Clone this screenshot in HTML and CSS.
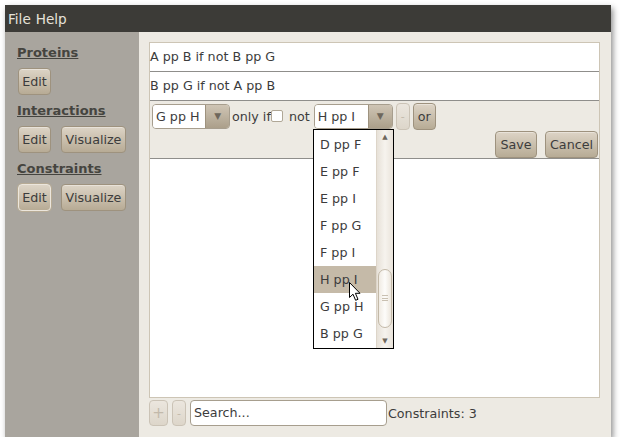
FILE: index.html
```html
<!DOCTYPE html>
<html>
<head>
<meta charset="utf-8">
<link rel="stylesheet" href="styles.css">
</head>
<body>
<div class="window">
  <div class="menubar"><span>File</span><span>Help</span></div>
  <div class="main">
    <div class="sidebar">
      <div class="section">
        <div class="heading">Proteins</div>
        <div class="btnrow"><button class="btn w-edit">Edit</button></div>
      </div>
      <div class="section">
        <div class="heading">Interactions</div>
        <div class="btnrow"><button class="btn w-edit">Edit</button><button class="btn w-vis">Visualize</button></div>
      </div>
      <div class="section">
        <div class="heading">Constraints</div>
        <div class="btnrow"><button class="btn w-edit focused">Edit</button><button class="btn w-vis">Visualize</button></div>
      </div>
    </div>
    <div class="content">
      <div class="panel">
        <div class="row">A pp B if not B pp G</div>
        <div class="row">B pp G if not A pp B</div>
        <div class="editrow">
          <div class="line1">
            <div class="combo c1"><span class="ctext">G pp H</span><span class="carrow">&#9660;</span></div>
            <span class="lbl l-only">only if</span>
            <span class="check"></span>
            <span class="lbl l-not">not</span>
            <div class="combo c2"><span class="ctext">H pp I</span><span class="carrow">&#9660;</span></div>
            <button class="btn dis minus">-</button>
            <button class="btn orbtn">or</button>
          </div>
          <div class="line2">
            <button class="btn save">Save</button>
            <button class="btn cancel">Cancel</button>
          </div>
        </div>
      </div>
      <div class="bottombar">
        <button class="btn dis plus">+</button>
        <button class="btn dis minus2">-</button>
        <div class="search">Search...</div>
        <span class="count">Constraints: 3</span>
      </div>
    </div>
  </div>
  <div class="popup">
    <div class="plist">
      <div class="item">D pp F</div>
      <div class="item">E pp F</div>
      <div class="item">E pp I</div>
      <div class="item">F pp G</div>
      <div class="item">F pp I</div>
      <div class="item sel">H pp I</div>
      <div class="item">G pp H</div>
      <div class="item">B pp G</div>
    </div>
    <div class="pscroll">
      <span class="up">&#9650;</span>
      <div class="thumb"><span class="grip"></span></div>
      <span class="down">&#9660;</span>
    </div>
  </div>
  <svg class="cursor" width="13" height="20" viewBox="0 0 13 20">
    <path d="M0.5 0.5 L0.5 15.5 L4 12.2 L6.6 18.3 L9 17.3 L6.4 11.3 L11 11.3 Z" fill="#fff" stroke="#000" stroke-width="1" stroke-linejoin="round"/>
  </svg>
</div>
</body>
</html>
```
FILE: styles.css
```css
* { box-sizing: border-box; }
body {
  margin: 0;
  background: #ffffff;
  font-family: "DejaVu Sans", sans-serif;
  font-size: 12.7px;
  color: #3c3c3c;
}
.window {
  position: relative;
  margin: 5px 0 0 5px;
  width: 606px;
  height: 432px;
  display: flex;
  flex-direction: column;
  box-shadow: 2px 3px 6px rgba(0,0,0,0.45);
}
.menubar {
  height: 27px;
  background: #3c3b37;
  color: #e6e2da;
  display: flex;
  align-items: center;
  gap: 5px;
  padding-left: 3px;
  font-size: 13.6px;
}
.main { flex: 1; display: flex; }
.sidebar {
  width: 134px;
  background: #a9a59e;
  padding: 11px 0 0 12px;
}
.section { height: 58px; }
.heading {
  height: 20px;
  line-height: 20px;
  font-weight: bold;
  font-size: 13px;
  text-decoration: underline;
  color: #45443f;
}
.btnrow { display: flex; gap: 10px; margin-top: 5px; padding-left: 1px; }
.btn {
  font-family: "DejaVu Sans", sans-serif;
  font-size: 12.7px;
  color: #3c3c3c;
  height: 27px;
  padding: 0;
  border: 1px solid #9e927e;
  border-radius: 4px;
  background: linear-gradient(#ddd4c6, #b7ab95);
  box-shadow: inset 0 1px 0 rgba(255,255,255,0.35);
}
.btn.focused { border-color: #ece6dc; box-shadow: 0 0 0 1px #b7ab95; }
.w-edit { width: 33px; }
.w-vis { width: 65px; }
.btn.dis {
  background: linear-gradient(#ebe6de, #ddd6ca);
  border-color: #cbc3b6;
  color: #c2b9ab;
  box-shadow: none;
}
.content {
  flex: 1;
  background: #edeae3;
  padding: 10px 11px 0 10px;
  display: flex;
  flex-direction: column;
}
.panel {
  height: 356px;
  background: #ffffff;
  border: 1px solid #cdc5b5;
}
.row {
  height: 29px;
  line-height: 28px;
  border-bottom: 1px solid #8f8e8b;
  white-space: nowrap;
}
.editrow {
  background: #edeae3;
  border-bottom: 1px solid #8f8e8b;
  padding: 1px 1px 0 1px;
}
.line1 { height: 28px; display: flex; align-items: center; }
.line2 { height: 28px; display: flex; justify-content: flex-end; align-items: flex-start; gap: 8px; padding-top: 1px; }
.combo {
  height: 25px;
  display: flex;
  border: 1px solid #a79e8e;
  border-radius: 4px;
  overflow: hidden;
}
.ctext {
  background: #fff;
  line-height: 23px;
  padding-left: 3px;
}
.carrow {
  background: linear-gradient(#cfc5b5, #ab9f8a);
  border-left: 1px solid #9e927e;
  color: #6e675c;
  font-size: 9px;
  line-height: 23px;
  text-align: center;
}
.c1 { width: 78px; margin-left: 1px; }
.c1 .ctext { width: 53px; }
.c1 .carrow { width: 24px; }
.c2 { width: 79px; margin-left: 4px; }
.c2 .ctext { width: 54px; }
.c2 .carrow { width: 24px; }
.lbl { margin-left: 2px; }
.check {
  width: 12px; height: 12px;
  background: #fff;
  border: 1px solid #b0a796;
  border-radius: 2px;
  margin-left: 0px;
}
.l-not { margin-left: 6px; }
.minus { width: 14px; height: 27px; margin-left: 3px; font-size: 11px; }
.orbtn { width: 23px; height: 27px; margin-left: 3px; }
.save { width: 42px; }
.cancel { width: 53px; }
.bottombar {
  margin-top: 2px;
  height: 26px;
  display: flex;
  align-items: center;
}
.plus { width: 19px; height: 26px; font-size: 15px; }
.minus2 { width: 14px; height: 26px; margin-left: 4px; font-size: 11px; }
.search {
  width: 197px;
  height: 26px;
  margin-left: 4px;
  background: #fff;
  border: 1px solid #a79e8e;
  border-radius: 4px;
  line-height: 24px;
  padding-left: 3px;
}
.count { margin-left: 1px; }
.popup {
  position: absolute;
  left: 308px;
  top: 124px;
  width: 81px;
  height: 220px;
  border: 1px solid #000;
  background: #fff;
  display: flex;
}
.plist { width: 62px; padding-top: 1px; }
.item {
  height: 27px;
  line-height: 27px;
  padding-left: 6px;
  white-space: nowrap;
}
.item.sel { background: #c5baa8; }
.pscroll {
  position: relative;
  width: 17px;
  background: linear-gradient(90deg, #e7e1d8, #f6f3ee 50%, #e9e3da);
  border-left: 1px solid #ddd5c9;
}
.up, .down {
  position: absolute;
  left: 0; width: 16px;
  text-align: center;
  font-size: 7px;
  color: #6e675c;
}
.up { top: 3px; }
.down { bottom: 3px; }
.thumb {
  position: absolute;
  left: 1px; top: 139px;
  width: 14px; height: 59px;
  border: 1px solid #c3b9a8;
  border-radius: 7px;
  background: linear-gradient(90deg, #f0ebe3, #fdfcfa 50%, #ece6dc);
}
.grip {
  position: absolute;
  left: 3px; top: 25px;
  width: 6px; height: 6px;
  border-top: 1px solid #c9c0b1;
  border-bottom: 1px solid #c9c0b1;
}
.grip::after {
  content: "";
  position: absolute;
  left: 0; top: 1.5px;
  width: 6px; height: 0;
  border-top: 1px solid #c9c0b1;
}
.cursor {
  position: absolute;
  left: 344px;
  top: 277px;
}
```
